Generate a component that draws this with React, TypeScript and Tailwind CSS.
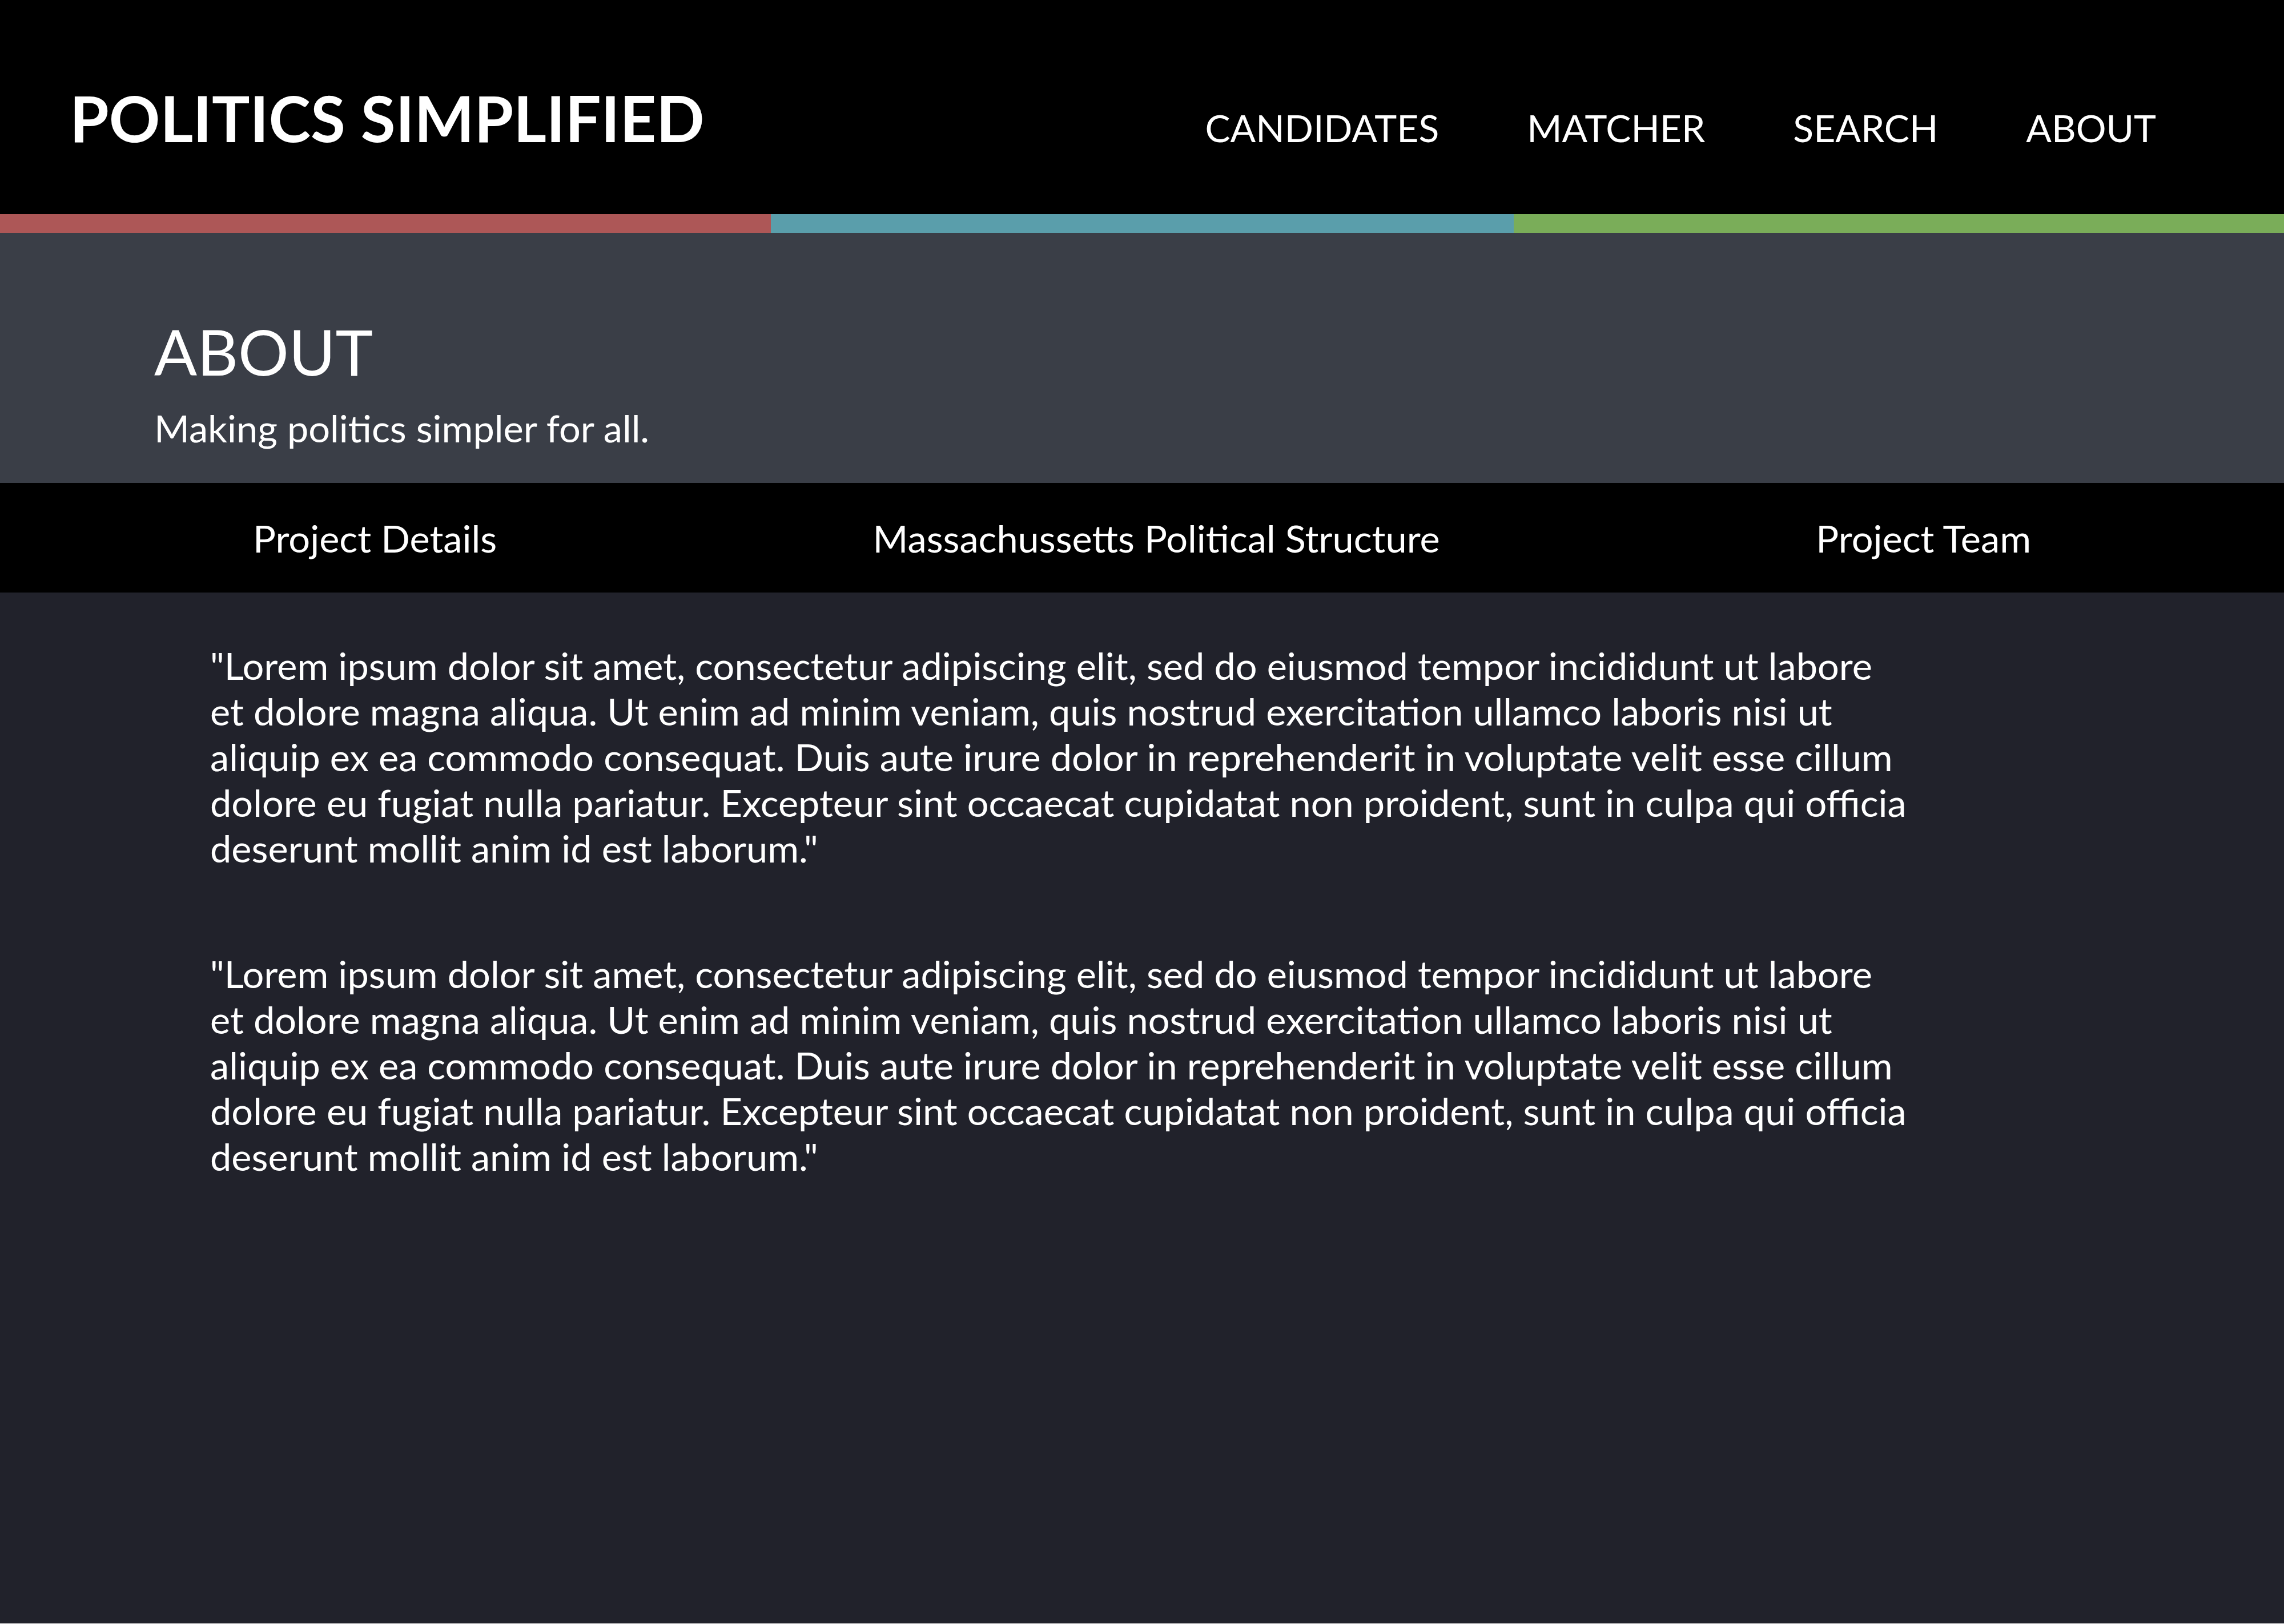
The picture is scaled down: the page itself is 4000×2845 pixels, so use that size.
const navItems = ['CANDIDATES', 'MATCHER', 'SEARCH', 'ABOUT'];
const tabs = ['Project Details', 'Massachussetts Political Structure', 'Project Team'];

const lorem = [
  '"Lorem ipsum dolor sit amet, consectetur adipiscing elit, sed do eiusmod tempor incididunt ut labore',
  'et dolore magna aliqua. Ut enim ad minim veniam, quis nostrud exercitation ullamco laboris nisi ut',
  'aliquip ex ea commodo consequat. Duis aute irure dolor in reprehenderit in voluptate velit esse cillum',
  'dolore eu fugiat nulla pariatur. Excepteur sint occaecat cupidatat non proident, sunt in culpa qui officia',
  'deserunt mollit anim id est laborum."',
];

function Paragraph() {
  return (
    <p className="text-[66.7px] leading-[80px]">
      {lorem.map((line, i) => (
        <span key={i} className="block whitespace-nowrap">
          {line}
        </span>
      ))}
    </p>
  );
}

export default function App() {
  return (
    <div className="flex h-[2844px] w-[4000px] flex-col bg-[#21222b] font-['Lato','Noto_Sans',sans-serif] text-white">
      {/* top bar */}
      <header className="flex h-[375px] items-baseline justify-between bg-black pl-[122px] pr-[224px] pt-[151px]">
        <h1 className="text-[111px] font-bold leading-none">POLITICS SIMPLIFIED</h1>
        <nav className="flex items-baseline gap-[154px] text-[66px] leading-none">
          {navItems.map((item) => (
            <a key={item} href="#">
              {item}
            </a>
          ))}
        </nav>
      </header>

      <div className="flex h-[33px]">
        <div className="w-[1350px] bg-[#ad5757]" />
        <div className="w-[1301px] bg-[#5a9eab]" />
        <div className="flex-1 bg-[#7aad59]" />
      </div>

      {/* page title */}
      <section className="bg-[#3a3e47] pl-[270px] pt-[152px] pb-[63px]">
        <h2 className="text-[111px] leading-none">ABOUT</h2>
        <p className="mt-[45px] text-[66.7px] leading-none">Making politics simpler for all.</p>
      </section>

      {/* sub navigation */}
      <div className="flex h-[192px] items-center justify-between bg-black px-[443px] text-[66.7px]">
        {tabs.map((tab) => (
          <span key={tab}>{tab}</span>
        ))}
      </div>

      <main className="flex flex-col gap-[140px] pl-[368px] pt-[87px]">
        <Paragraph />
        <Paragraph />
      </main>
    </div>
  );
}
